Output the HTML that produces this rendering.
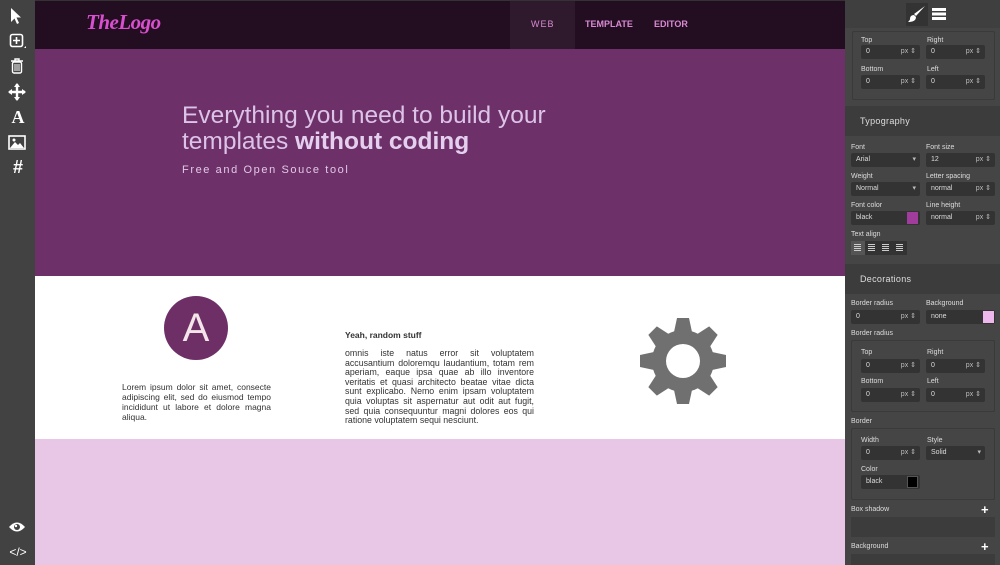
<!DOCTYPE html>
<html><head><style>
*{margin:0;padding:0;box-sizing:border-box}
body{width:1000px;height:565px;overflow:hidden;font-family:"Liberation Sans",Arial,sans-serif;background:#444;position:relative}
.a{position:absolute}
#left{left:0;top:0;width:35px;height:565px;background:#424242}
#canvas{left:35px;top:0;width:810px;height:565px;background:#e8c6e6;border-top:1px solid #333}
#hdr{left:0;top:0;width:810px;height:48px;background:#230d21}
#hero{left:0;top:48px;width:810px;height:227px;background:#6e3068}
#mid{left:0;top:275px;width:810px;height:163px;background:#fff}
#right{left:845px;top:0;width:155px;height:565px;background:#454545;color:#ddd;font-size:7px}
.lbl{position:absolute;font-size:7px;color:#ddd}
.inp{position:absolute;height:14px;background:#333;color:#ddd;font-size:7px;line-height:14px;padding-left:5px;border-radius:2px}
.inp .u{position:absolute;right:4px;top:0;color:#bbb}
.box{position:absolute;border:1px solid #3a3a3a;border-radius:2px}
.sec{position:absolute;left:0;width:155px;background:#3c3c3c;color:#ddd;font-size:9px;padding-left:15px;letter-spacing:.3px}
.ic{position:absolute;left:8px;color:#fff;font-size:16px;width:20px;text-align:center}
.al{position:absolute;top:244px;width:7px;height:1px;background:#ccc;box-shadow:0 2px 0 #ccc,0 4px 0 #ccc,0 6px 0 #ccc}
</style></head><body>
<div id="left" class="a">
<svg class="a" style="left:9px;top:7px" width="14" height="18" viewBox="0 0 14 18"><path d="M2 1 L2 15 L5.5 11.5 L8 17 L10 16 L7.5 10.5 L12 10.5 Z" fill="#fff"/></svg>
<svg class="a" style="left:9px;top:33px" width="18" height="18" viewBox="0 0 18 18"><rect x="1.5" y="1.5" width="12" height="12" rx="2" fill="none" stroke="#fff" stroke-width="1.6"/><path d="M7.5 4v7M4 7.5h7" stroke="#fff" stroke-width="1.6"/><path d="M15 15l2 0 0-2z" fill="#fff"/></svg>
<svg class="a" style="left:10px;top:58px" width="14" height="16" viewBox="0 0 14 16"><path d="M1 3h12M5 3V1h4v2" stroke="#fff" stroke-width="1.4" fill="none"/><rect x="2.5" y="4" width="9" height="11" rx="1.5" fill="none" stroke="#fff" stroke-width="1.4"/><path d="M5 6v7M7 6v7M9 6v7" stroke="#fff" stroke-width="1"/></svg>
<svg class="a" style="left:8px;top:83px" width="18" height="18" viewBox="0 0 18 18"><path d="M9 1v16M1 9h16" stroke="#fff" stroke-width="2.4"/><path d="M9 0l-3 4h6zM9 18l-3-4h6zM0 9l4-3v6zM18 9l-4-3v6z" fill="#fff"/></svg>
<div class="ic" style="top:107px;font-family:'Liberation Serif',serif;font-weight:bold;font-size:18px">A</div>
<svg class="a" style="left:8px;top:135px" width="18" height="15" viewBox="0 0 18 15"><rect x="1" y="1" width="16" height="13" fill="none" stroke="#fff" stroke-width="1.6"/><path d="M2 13l5-6 3 3 2-2 4 5z" fill="#fff"/><circle cx="6" cy="5" r="1.5" fill="#fff"/></svg>
<div class="ic" style="top:157px;font-weight:bold;font-size:18px">#</div>
<svg class="a" style="left:8px;top:521px" width="18" height="12" viewBox="0 0 18 12"><path d="M1 6Q9-3 17 6Q9 15 1 6Z" fill="#fff"/><circle cx="9" cy="6" r="3" fill="#424242"/><circle cx="8" cy="5" r="1.2" fill="#fff"/></svg>
<div class="ic" style="top:545px;font-size:12px">&lt;/&gt;</div>
</div>
<div id="canvas" class="a">
<div id="hdr" class="a">
<div class="a" style="left:51px;top:9px;font-family:'Liberation Serif',serif;font-style:italic;font-weight:bold;font-size:21px;color:#d84fcf;letter-spacing:-0.5px">TheLogo</div>
<div class="a" style="left:475px;top:0;width:65px;height:48px;background:#2f1a2d"></div>
<div class="a" style="left:496px;top:18px;font-size:9px;color:#d78ad1;letter-spacing:1px">WEB</div>
<div class="a" style="left:550px;top:18px;font-size:9px;color:#d78ad1;font-weight:bold">TEMPLATE</div>
<div class="a" style="left:619px;top:18px;font-size:9px;color:#d78ad1;font-weight:bold">EDITOR</div>
</div>
<div id="hero" class="a">
<div class="a" style="left:147px;top:54px;font-size:24.5px;line-height:26px;color:#dcc3e8">Everything you need to build your<br>templates <b style="font-weight:bold;color:#e4d0ee">without coding</b></div>
<div class="a" style="left:147px;top:115px;font-size:11px;color:#e0c8ea;letter-spacing:1.6px">Free and Open Souce tool</div>
</div>
<div id="mid" class="a">
<div class="a" style="left:129px;top:20px;width:64px;height:64px;border-radius:50%;background:#6e2f67;color:#f4e5ea;font-size:40px;text-align:center;line-height:64px">A</div>
<div class="a" style="left:87px;top:106px;width:149px;font-size:8.5px;line-height:10px;color:#333;text-align:justify">Lorem ipsum dolor sit amet, consecte adipiscing elit, sed do eiusmod tempo incididunt ut labore et dolore magna aliqua.</div>
<div class="a" style="left:310px;top:54px;font-size:8.5px;font-weight:bold;color:#333">Yeah, random stuff</div>
<div class="a" style="left:310px;top:73px;width:189px;font-size:8.8px;line-height:9.6px;color:#333;text-align:justify">omnis iste natus error sit voluptatem accusantium doloremqu laudantium, totam rem aperiam, eaque ipsa quae ab illo inventore veritatis et quasi architecto beatae vitae dicta sunt explicabo. Nemo enim ipsam voluptatem quia voluptas sit aspernatur aut odit aut fugit, sed quia consequuntur magni dolores eos qui ratione voluptatem sequi nesciunt.</div>
<svg class="a" style="left:604px;top:41px" width="88" height="88" viewBox="-44 -44 88 88">
<g fill="#707070"><circle r="31"/>
<g id="t"><path d="M-9 -29 L-6 -43 L6 -43 L9 -29Z"/></g>
<use href="#t" transform="rotate(45)"/><use href="#t" transform="rotate(90)"/><use href="#t" transform="rotate(135)"/><use href="#t" transform="rotate(180)"/><use href="#t" transform="rotate(225)"/><use href="#t" transform="rotate(270)"/><use href="#t" transform="rotate(315)"/></g>
<circle r="17" fill="#fff"/></svg>
</div>
</div>
<div id="right" class="a">
<div class="a" style="left:0;top:0;width:155px;height:28px;background:#3f3f3f"></div>
<div class="a" style="left:61px;top:3px;width:22px;height:23px;background:#333"></div>
<svg class="a" style="left:63px;top:5px" width="18" height="18" viewBox="0 0 18 18"><path d="M17 1L8 11l-2-2z" fill="#fff"/><path d="M6 10c-3 0-4 2-4 4 0 1-1 2-2 3 4 0 8-1 8-5z" fill="#fff"/></svg>
<div class="a" style="left:87px;top:8px;width:14px;height:2.5px;background:#fff;box-shadow:0 4.5px 0 #fff,0 9px 0 #fff"></div>
<div class="box" style="left:7px;top:31px;width:143px;height:69px"></div>
<div class="lbl" style="left:16px;top:37px">Top</div><div class="lbl" style="left:82px;top:37px">Right</div>
<div class="inp" style="left:16px;top:45px;width:59px">0<span class="u">px ⇕</span></div>
<div class="inp" style="left:81px;top:45px;width:59px">0<span class="u">px ⇕</span></div>
<div class="lbl" style="left:16px;top:66px">Bottom</div><div class="lbl" style="left:82px;top:66px">Left</div>
<div class="inp" style="left:16px;top:75px;width:59px">0<span class="u">px ⇕</span></div>
<div class="inp" style="left:81px;top:75px;width:59px">0<span class="u">px ⇕</span></div>
<div class="sec" style="top:106px;height:30px;line-height:30px">Typography</div>
<div class="lbl" style="left:6px;top:144px">Font</div><div class="lbl" style="left:81px;top:144px">Font size</div>
<div class="inp" style="left:6px;top:153px;width:69px">Arial<span class="u">▾</span></div>
<div class="inp" style="left:81px;top:153px;width:69px">12<span class="u">px ⇕</span></div>
<div class="lbl" style="left:6px;top:173px">Weight</div><div class="lbl" style="left:81px;top:173px">Letter spacing</div>
<div class="inp" style="left:6px;top:182px;width:69px">Normal<span class="u">▾</span></div>
<div class="inp" style="left:81px;top:182px;width:69px">normal<span class="u">px ⇕</span></div>
<div class="lbl" style="left:6px;top:202px">Font color</div><div class="lbl" style="left:81px;top:202px">Line height</div>
<div class="inp" style="left:6px;top:211px;width:69px">black</div>
<div class="a" style="left:62px;top:212px;width:11px;height:12px;background:#a03c9b"></div>
<div class="inp" style="left:81px;top:211px;width:69px">normal<span class="u">px ⇕</span></div>
<div class="lbl" style="left:6px;top:231px">Text align</div>
<div class="a" style="left:6px;top:241px;width:56px;height:14px;background:#333"></div>
<div class="a" style="left:6px;top:241px;width:14px;height:14px;background:#555"></div>
<div class="al" style="left:9px"></div><div class="al" style="left:23px"></div><div class="al" style="left:37px"></div><div class="al" style="left:51px"></div>
<div class="sec" style="top:264px;height:30px;line-height:30px">Decorations</div>
<div class="lbl" style="left:6px;top:300px">Border radius</div><div class="lbl" style="left:81px;top:300px">Background</div>
<div class="inp" style="left:6px;top:310px;width:69px">0<span class="u">px ⇕</span></div>
<div class="inp" style="left:81px;top:310px;width:69px">none</div>
<div class="a" style="left:138px;top:311px;width:11px;height:12px;background:#efb8ec"></div>
<div class="lbl" style="left:6px;top:330px">Border radius</div>
<div class="box" style="left:6px;top:340px;width:144px;height:72px"></div>
<div class="lbl" style="left:16px;top:349px">Top</div><div class="lbl" style="left:82px;top:349px">Right</div>
<div class="inp" style="left:16px;top:359px;width:59px">0<span class="u">px ⇕</span></div>
<div class="inp" style="left:81px;top:359px;width:59px">0<span class="u">px ⇕</span></div>
<div class="lbl" style="left:16px;top:378px">Bottom</div><div class="lbl" style="left:82px;top:378px">Left</div>
<div class="inp" style="left:16px;top:388px;width:59px">0<span class="u">px ⇕</span></div>
<div class="inp" style="left:81px;top:388px;width:59px">0<span class="u">px ⇕</span></div>
<div class="lbl" style="left:6px;top:418px">Border</div>
<div class="box" style="left:6px;top:428px;width:144px;height:72px"></div>
<div class="lbl" style="left:16px;top:437px">Width</div><div class="lbl" style="left:82px;top:437px">Style</div>
<div class="inp" style="left:16px;top:446px;width:59px">0<span class="u">px ⇕</span></div>
<div class="inp" style="left:81px;top:446px;width:59px">Solid<span class="u">▾</span></div>
<div class="lbl" style="left:16px;top:466px">Color</div>
<div class="inp" style="left:16px;top:475px;width:59px">black</div>
<div class="a" style="left:62px;top:476px;width:11px;height:12px;background:#000;border:1px solid #555"></div>
<div class="lbl" style="left:6px;top:506px">Box shadow</div>
<div class="a" style="left:136px;top:502px;color:#fff;font-size:13px;font-weight:bold">+</div>
<div class="a" style="left:6px;top:517px;width:144px;height:20px;background:#3c3c3c"></div>
<div class="lbl" style="left:6px;top:543px">Background</div>
<div class="a" style="left:136px;top:539px;color:#fff;font-size:13px;font-weight:bold">+</div>
<div class="a" style="left:6px;top:554px;width:144px;height:11px;background:#3c3c3c"></div>
</div>
</body></html>
